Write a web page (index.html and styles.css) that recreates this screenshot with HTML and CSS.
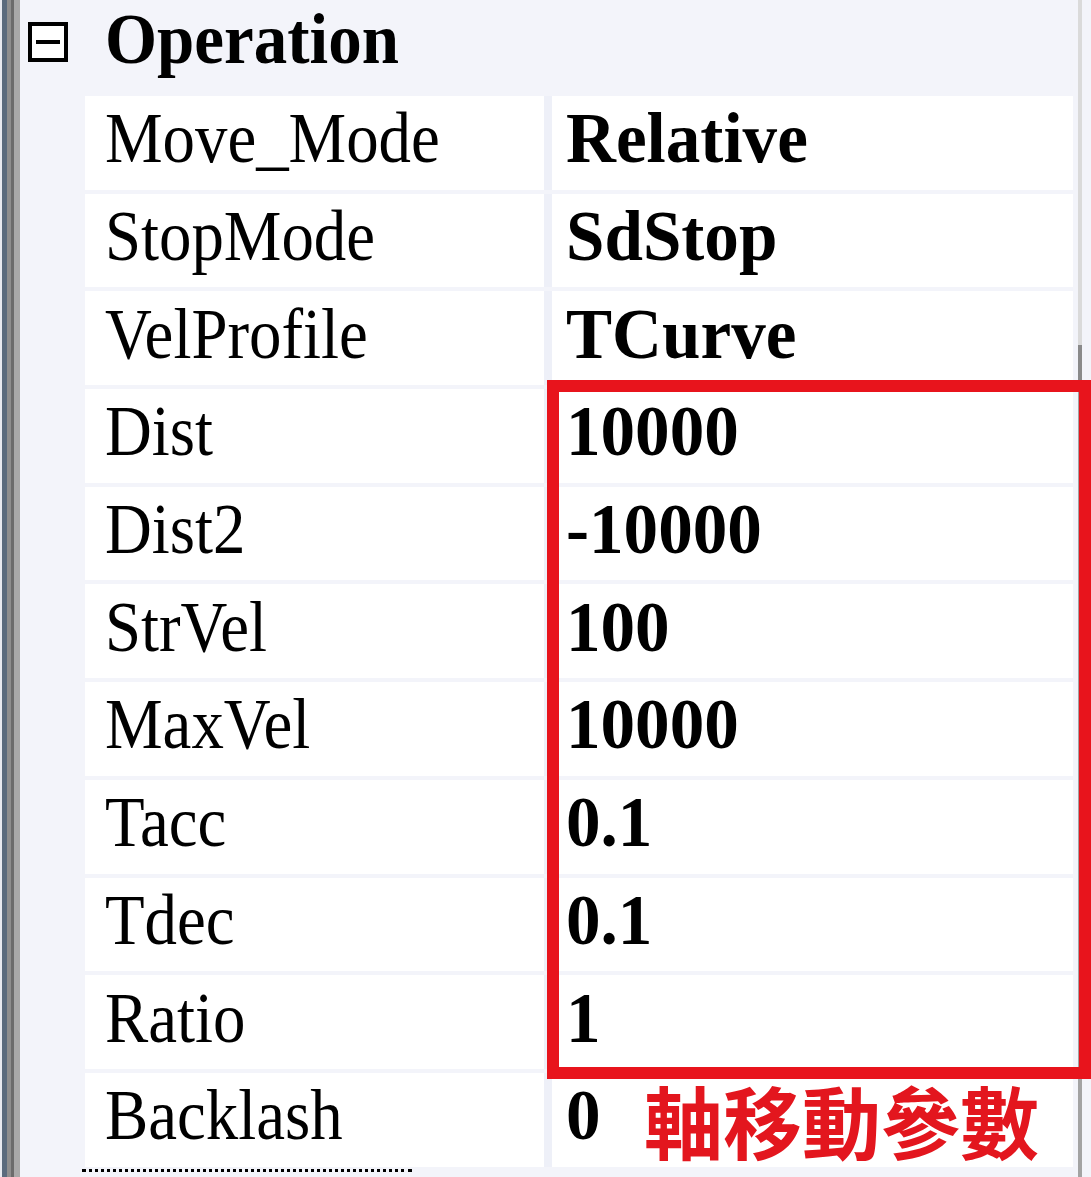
FILE: index.html
```html
<!DOCTYPE html>
<html>
<head>
<meta charset="utf-8">
<link rel="stylesheet" href="styles.css">
</head>
<body>
<div class="panel">
  <div class="edge"></div>
  <div class="main">
    <div class="header">
      <span class="toggle"><span class="minus"></span></span>
      <span class="cat"><span class="sx">Operation</span></span>
    </div>
    <div class="rows">
      <div class="row"><div class="name"><span class="sx">Move_Mode</span></div><div class="sep"></div><div class="val"><span class="sx">Relative</span></div></div>
      <div class="row"><div class="name"><span class="sx">StopMode</span></div><div class="sep"></div><div class="val"><span class="sx">SdStop</span></div></div>
      <div class="row"><div class="name"><span class="sx">VelProfile</span></div><div class="sep"></div><div class="val"><span class="sx">TCurve</span></div></div>
      <div class="row"><div class="name"><span class="sx">Dist</span></div><div class="sep"></div><div class="val"><span class="sx">10000</span></div></div>
      <div class="row"><div class="name"><span class="sx">Dist2</span></div><div class="sep"></div><div class="val"><span class="sx">-10000</span></div></div>
      <div class="row"><div class="name"><span class="sx">StrVel</span></div><div class="sep"></div><div class="val"><span class="sx">100</span></div></div>
      <div class="row"><div class="name"><span class="sx">MaxVel</span></div><div class="sep"></div><div class="val"><span class="sx">10000</span></div></div>
      <div class="row"><div class="name"><span class="sx">Tacc</span></div><div class="sep"></div><div class="val"><span class="sx">0.1</span></div></div>
      <div class="row"><div class="name"><span class="sx">Tdec</span></div><div class="sep"></div><div class="val"><span class="sx">0.1</span></div></div>
      <div class="row"><div class="name"><span class="sx">Ratio</span></div><div class="sep"></div><div class="val"><span class="sx">1</span></div></div>
      <div class="row"><div class="name"><span class="sx">Backlash</span></div><div class="sep"></div><div class="val"><span class="sx">0</span><span class="note">軸移動參數</span></div></div>
    </div>
    <div class="focus"></div>
  </div>
  <div class="rline"></div>
  <div class="highlight"></div>
</div>
</body>
</html>
```

FILE: styles.css
```css
html, body {
  margin: 0;
  padding: 0;
  background: #f3f4fa;
}
.panel {
  position: relative;
  width: 1091px;
  height: 1177px;
  display: flex;
  overflow: hidden;
  background: #f3f4fa;
}
.edge {
  width: 20px;
  flex: none;
  background: linear-gradient(to right, #e8eaf0 0, #e8eaf0 2px, #5b6b7d 2px, #5b6b7d 7px, #8e8e8e 7px, #8e8e8e 11px, #6c6c6c 11px, #6c6c6c 14px, #a9a9a9 14px, #a9a9a9 20px);
}
.main {
  width: 1055px;
  flex: none;
  display: flex;
  flex-direction: column;
}
.header {
  height: 96px;
  display: flex;
  align-items: flex-start;
}
.toggle {
  margin-left: 8px;
  margin-top: 22px;
  width: 40px;
  height: 40px;
  box-sizing: border-box;
  border: 4px solid #000;
  display: flex;
  align-items: center;
  justify-content: center;
  background: #fff;
}
.minus {
  width: 24px;
  height: 4px;
  background: #000;
}
.cat {
  margin-left: 37px;
  font-family: "Liberation Serif", serif;
  font-weight: bold;
  font-size: 72px;
  line-height: 78px;
  color: #000;
}
.cat .sx { transform: scaleX(0.93); }
.sx {
  display: inline-block;
  transform-origin: left center;
}
.rows {
  margin-left: 65px;
  display: flex;
  flex-direction: column;
  gap: 4px;
}
.row {
  height: 93.7px;
  display: flex;
}
.name {
  width: 459px;
  background: #fff;
  box-sizing: border-box;
  padding-left: 20px;
  padding-bottom: 8px;
  display: flex;
  align-items: center;
  font-family: "Liberation Serif", serif;
  font-size: 72px;
  color: #000;
  white-space: nowrap;
}
.name .sx { transform: scaleX(0.9); }
.sep {
  width: 8px;
  background: #eef0f8;
}
.val {
  width: 521px;
  background: #fff;
  box-sizing: border-box;
  padding-left: 14px;
  padding-bottom: 8px;
  display: flex;
  align-items: center;
  font-family: "Liberation Serif", serif;
  font-weight: bold;
  font-size: 72px;
  color: #000;
  white-space: nowrap;
}
.val .sx { transform: scaleX(0.96); }
.note {
  margin-left: 42px;
  margin-top: 8px;
  font-family: "Noto Sans CJK TC", "Noto Sans CJK SC", sans-serif;
  font-weight: bold;
  font-size: 79px;
  line-height: 1;
  color: #e3161e;
}
.focus {
  margin-left: 62px;
  margin-top: 2px;
  width: 330px;
  border-top: 3px dotted #000;
}
.rline {
  margin-left: 3px;
  width: 4px;
  flex: none;
  background: linear-gradient(to bottom, #dadada 0, #dadada 345px, #8a8a8a 345px, #8a8a8a 385px, #a3a3a3 385px);
}
.highlight {
  position: absolute;
  left: 547px;
  top: 380px;
  width: 544px;
  height: 699px;
  box-sizing: border-box;
  border: 12px solid #e8141c;
}
```
